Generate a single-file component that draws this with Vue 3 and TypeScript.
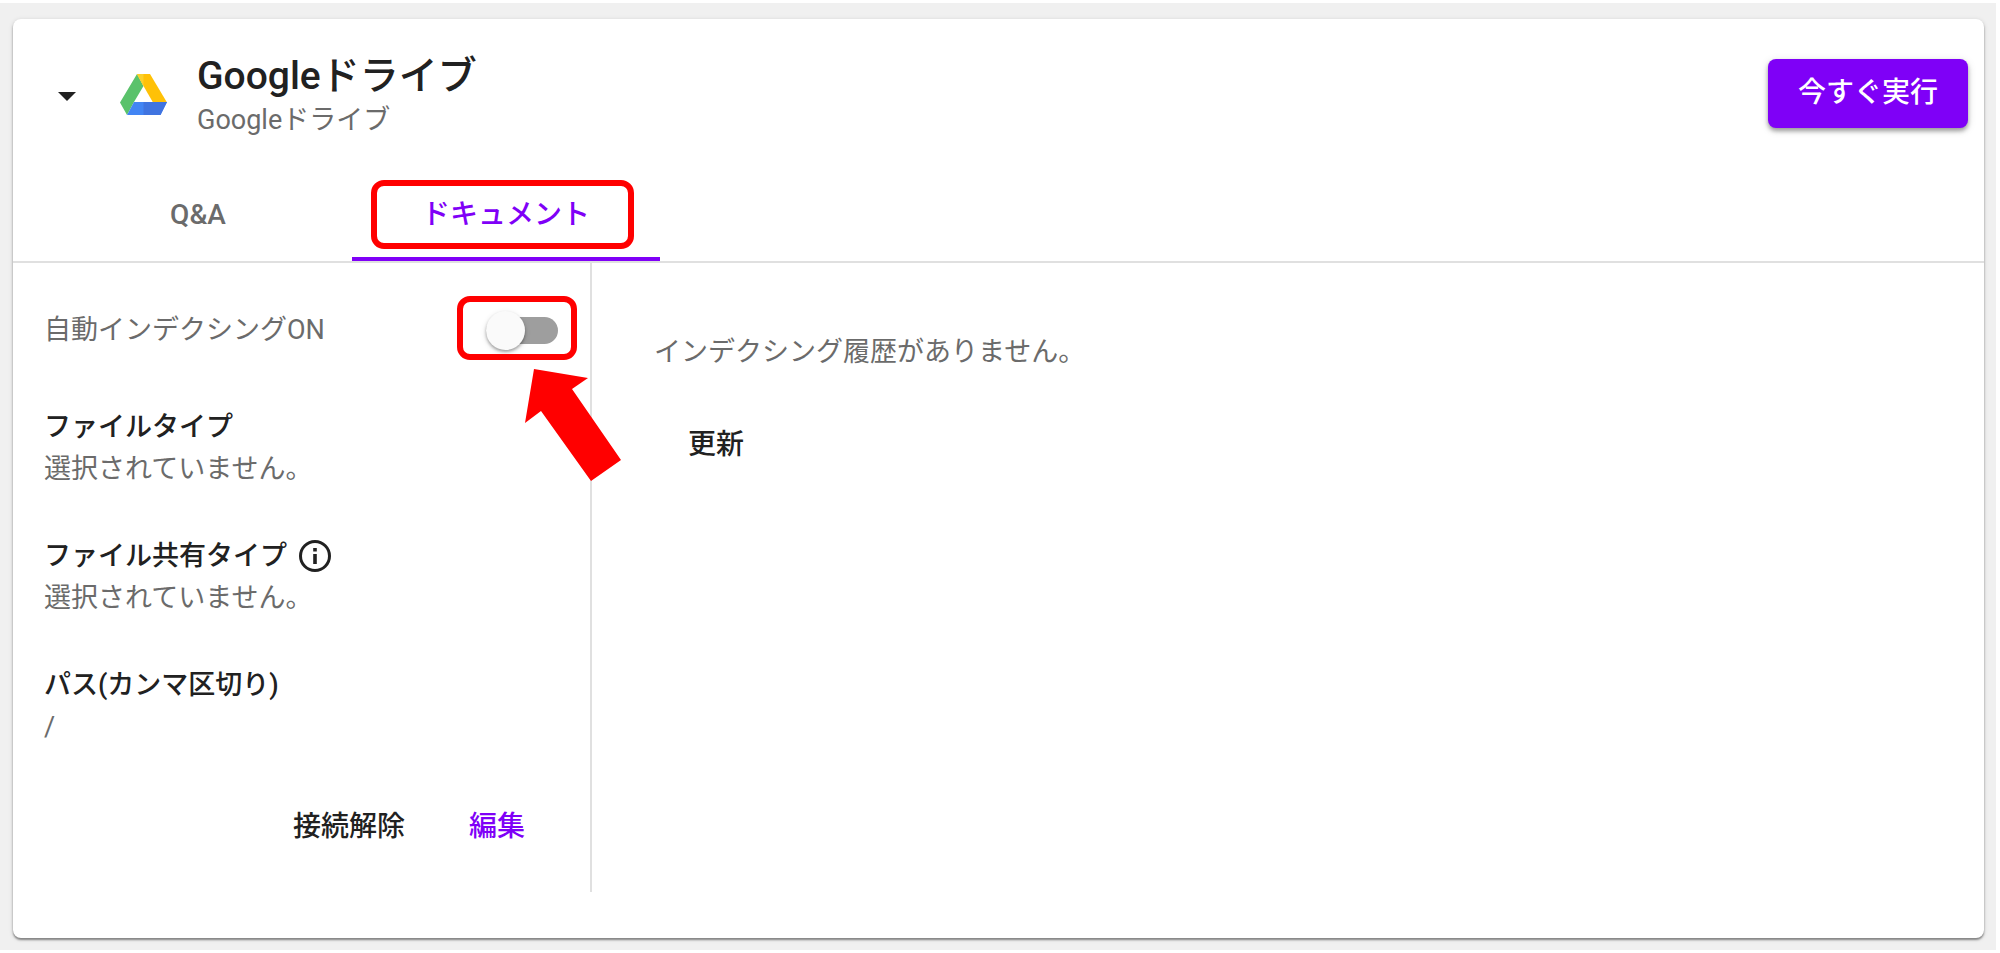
<script setup lang="ts">
import { ref } from 'vue'

interface Setting {
  label: string
  value: string
  info?: boolean
}

const autoIndexing = ref(false)
const activeTab = ref('documents')
const tabs = [
  { id: 'qa', label: 'Q&A' },
  { id: 'documents', label: 'ドキュメント' },
]
const settings: Setting[] = [
  { label: 'ファイルタイプ', value: '選択されていません。' },
  { label: 'ファイル共有タイプ', value: '選択されていません。', info: true },
  { label: 'パス(カンマ区切り)', value: '/' },
]
</script>

<template>
  <main class="page">
    <section class="card">
      <header class="header">
        <button class="caret" type="button" aria-label="折りたたむ">
          <svg viewBox="0 0 18 9" width="18" height="9"><path d="M0 0h18L9 9z" fill="#212121" /></svg>
        </button>
        <svg class="logo" viewBox="0 0 47 41" width="47" height="41" aria-hidden="true">
          <path d="M17 0L23.500 12L14 28L7 41L0 28.500Z" fill="#5ac26b" />
          <path d="M17 0H30L47 28.500H33L23.500 12Z" fill="#ffc107" />
          <path d="M17 0H23.500V12Z" fill="#fbd02b" />
          <path d="M14 28H47L40.500 41H7Z" fill="#4285f4" />
          <path d="M23.500 28H47L40.500 41H23.500Z" fill="#4074e0" />
        </svg>
        <div class="titles">
          <h1 class="title">Googleドライブ</h1>
          <p class="subtitle">Googleドライブ</p>
        </div>
        <button class="run" type="button">今すぐ実行</button>
      </header>

      <nav class="tabs" role="tablist">
        <button
          v-for="tab in tabs"
          :key="tab.id"
          class="tab"
          :class="{ active: tab.id === activeTab }"
          type="button"
          role="tab"
          :aria-selected="tab.id === activeTab"
          @click="activeTab = tab.id"
        >
          {{ tab.label }}
          <span v-if="tab.id === 'documents'" class="mark mark-tab"></span>
        </button>
      </nav>

      <div class="body">
        <div class="side">
          <div class="switch-row">
            <label for="auto-index">自動インデクシングON</label>
            <span class="switch">
              <input id="auto-index" v-model="autoIndexing" type="checkbox" role="switch" />
              <span class="mark mark-switch"></span>
              <svg class="arrow" viewBox="0 0 98 114" width="98" height="114" aria-hidden="true">
                <path d="M10 1L64 10L48 21L97 92L67 113L17 43L1 55Z" fill="#f00" />
              </svg>
            </span>
          </div>
          <dl class="settings">
            <div v-for="item in settings" :key="item.label" class="setting">
              <dt>
                {{ item.label }}
                <svg v-if="item.info" class="info" viewBox="0 0 32 32" width="32" height="32" aria-hidden="true">
                  <circle cx="16" cy="16" r="14.500" fill="none" stroke="#212121" stroke-width="3" />
                  <path d="M14.200 8h3.600v3.400h-3.600zM14.200 14h3.600v10h-3.600z" fill="#212121" />
                </svg>
              </dt>
              <dd>{{ item.value }}</dd>
            </div>
          </dl>
          <div class="actions">
            <button class="text-button" type="button">接続解除</button>
            <button class="text-button primary" type="button">編集</button>
          </div>
        </div>
        <div class="history">
          <p>インデクシング履歴がありません。</p>
          <button class="text-button" type="button">更新</button>
        </div>
      </div>
    </section>
  </main>
</template>

<style>
body {
  margin: 0;
  background: #fff;
}
</style>

<style scoped>
.page {
  box-sizing: border-box;
  margin: 3px 4px 4px 0;
  padding: 16px 12px 12px 13px;
  background: #f0f0f0;
  color: #212121;
  font-family: Roboto, "Noto Sans CJK JP", sans-serif;
  font-size: 27px;
  line-height: 42px;
}
button {
  border: 0;
  padding: 0;
  background: none;
  color: inherit;
  font: inherit;
  font-size: 28px;
  font-weight: 500;
  cursor: pointer;
}
h1, p, dl, dd {
  margin: 0;
}
.card {
  box-sizing: border-box;
  padding-bottom: 46px;
  border-radius: 8px;
  background: #fff;
  box-shadow: 0 2px 2px rgba(0, 0, 0, 0.4), 0 1px 5px rgba(0, 0, 0, 0.14);
}
.header {
  display: flex;
  align-items: center;
  height: 148px;
  padding: 0 16px 0 31px;
}
.caret {
  display: flex;
  align-items: center;
  justify-content: center;
  width: 46px;
  height: 46px;
}
.caret svg {
  margin-top: 6px;
}
.logo {
  margin: 3px 0 0 30px;
}
.titles {
  flex: 1;
  padding: 8px 0 0 30px;
}
.title {
  font-size: 39px;
  font-weight: 500;
  line-height: 46px;
}
.subtitle {
  color: #6b6b6b;
  line-height: 42px;
}
.run {
  width: 200px;
  height: 69px;
  border-radius: 8px;
  background: #7f00f7;
  box-shadow: 0 3px 4px rgba(0, 0, 0, 0.34), 0 2px 10px rgba(0, 0, 0, 0.12);
  color: #fff;
}
.tabs {
  display: flex;
  height: 94px;
  padding-left: 31px;
  border-bottom: 2px solid #e0e0e0;
}
.tab {
  position: relative;
  width: 308px;
  padding-top: 6px;
  border-bottom: 4px solid transparent;
  color: #6b6b6b;
}
.tab.active {
  border-color: #7f00f7;
  color: #7f00f7;
}
.mark {
  position: absolute;
  box-sizing: border-box;
  border: 6px solid #f00;
  border-radius: 13px;
  pointer-events: none;
}
.mark-tab {
  inset: 13px 26px 8px 19px;
}
.mark-switch {
  inset: -15px -19px -10px -29px;
}
.body {
  display: flex;
}
.side {
  box-sizing: border-box;
  width: 579px;
  height: 629px;
  padding: 46px 32px 0 31px;
  border-right: 2px solid #e0e0e0;
}
.switch-row {
  display: flex;
  align-items: center;
  justify-content: space-between;
  color: #6b6b6b;
}
.switch {
  position: relative;
  display: flex;
  align-items: center;
  width: 72px;
  height: 39px;
}
.switch input {
  appearance: none;
  position: relative;
  width: 100%;
  height: 27px;
  margin: 0;
  border-radius: 14px;
  background: #9e9e9e;
}
.switch input::before {
  content: "";
  position: absolute;
  top: -6px;
  left: 0;
  width: 39px;
  height: 39px;
  border-radius: 50%;
  background: #fafafa;
  box-shadow: 0 2px 3px rgba(0, 0, 0, 0.3), 0 2px 6px rgba(0, 0, 0, 0.12);
}
.switch input:checked::before {
  left: 33px;
}
.arrow {
  position: absolute;
  top: 57px;
  left: 38px;
  z-index: 1;
  pointer-events: none;
}
.settings {
  display: flex;
  flex-direction: column;
  gap: 45px;
  padding-top: 55px;
}
dt {
  display: flex;
  align-items: center;
  gap: 12px;
  font-weight: 500;
}
dd {
  color: #6b6b6b;
}
.actions {
  display: flex;
  justify-content: flex-end;
  gap: 64px;
  padding: 58px 33px 0 0;
}
.text-button.primary {
  color: #7f00f7;
}
.history {
  flex: 1;
  padding: 68px 62px;
  color: #6b6b6b;
}
.history .text-button {
  margin: 51px 0 0 34px;
  color: #212121;
}
</style>
